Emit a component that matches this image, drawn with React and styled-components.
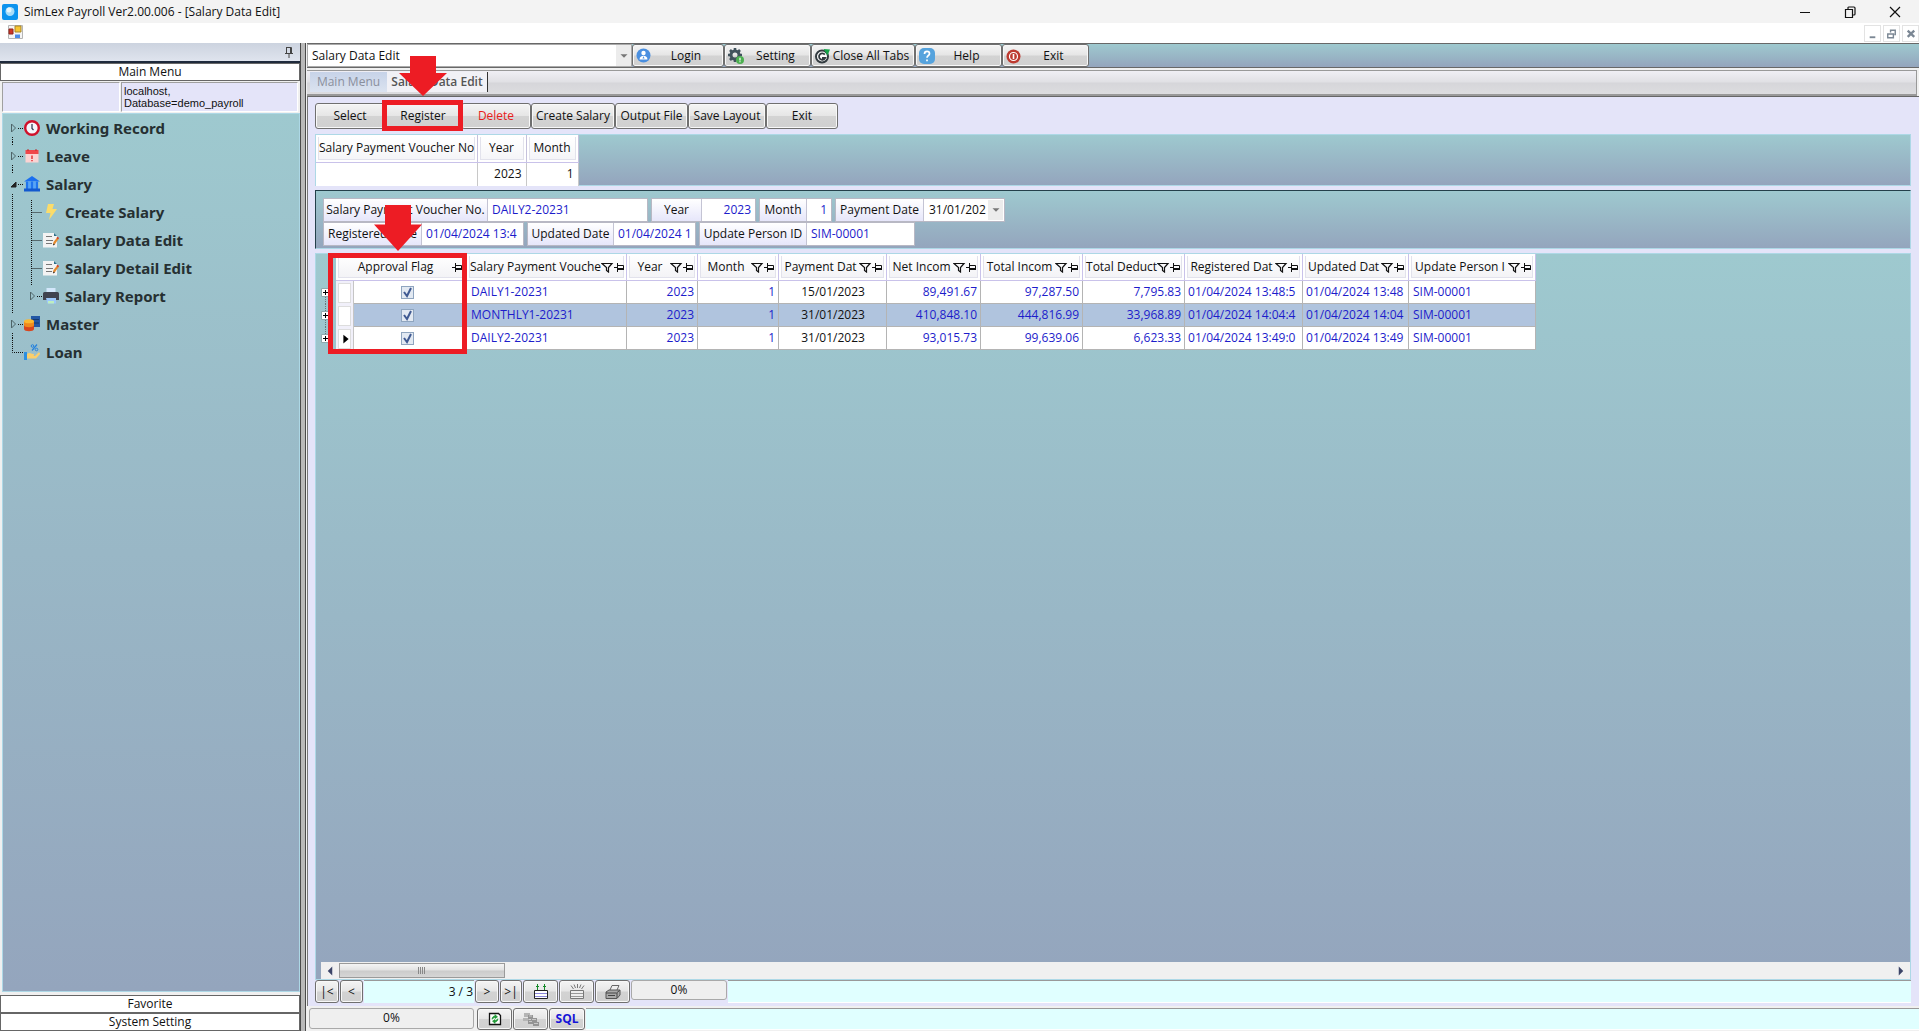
import React from 'react';
import styled, { createGlobalStyle } from 'styled-components';

const teal = 'linear-gradient(#9ec9cf, #94a5bd)';
const metal = 'linear-gradient(#f4f4f4, #e6e6e6 48%, #d3d3d3 52%, #d0d0d0)';

const menu = [
  { name: 'Working Record', icon: 'clock', depth: 0, closed: true },
  { name: 'Leave', icon: 'calendar', depth: 0, closed: true },
  { name: 'Salary', icon: 'bank', depth: 0, open: true },
  { name: 'Create Salary', icon: 'bolt', depth: 1, first: true },
  { name: 'Salary Data Edit', icon: 'note', depth: 1 },
  { name: 'Salary Detail Edit', icon: 'note', depth: 1 },
  { name: 'Salary Report', icon: 'printer', depth: 1, closed: true },
  { name: 'Master', icon: 'database', depth: 0, closed: true },
  { name: 'Loan', icon: 'loan', depth: 0, last: true },
];

const columns = [
  { name: 'Salary Payment Vouche', width: 160, align: 'left' },
  { name: 'Year', width: 71, align: 'right' },
  { name: 'Month', width: 81, align: 'right' },
  { name: 'Payment Dat', width: 108, align: 'center', dark: true },
  { name: 'Net Incom', width: 94, align: 'right' },
  { name: 'Total Incom', width: 102, align: 'right' },
  { name: 'Total Deduct', width: 102, align: 'right' },
  { name: 'Registered Dat', width: 118, align: 'left', tight: true },
  { name: 'Updated Dat', width: 106, align: 'left', tight: true },
  { name: 'Update Person I', width: 127, align: 'left' },
];

const rows = [
  ['DAILY1-20231', '2023', '1', '15/01/2023', '89,491.67', '97,287.50', '7,795.83', '01/04/2024 13:48:5', '01/04/2024 13:48', 'SIM-00001'],
  ['MONTHLY1-20231', '2023', '1', '31/01/2023', '410,848.10', '444,816.99', '33,968.89', '01/04/2024 14:04:4', '01/04/2024 14:04', 'SIM-00001'],
  ['DAILY2-20231', '2023', '1', '31/01/2023', '93,015.73', '99,639.06', '6,623.33', '01/04/2024 13:49:0', '01/04/2024 13:49', 'SIM-00001'],
];

const Global = createGlobalStyle`
  * { box-sizing: border-box; }
  body {
    margin: 0;
    background: #f0f0f0;
    color: #111;
    font: 12px/16px 'Open Sans', 'Noto Sans', sans-serif;
  }
  button, input, select {
    font: inherit;
    color: inherit;
    margin: 0;
    padding: 0;
    border: 0;
    border-radius: 0;
    background: none;
  }
  svg { display: block; flex: none; }
`;

const icons = {
  clock: (
    <>
      <circle cx="8" cy="8" r="6.800" fill="#f4f5fb" stroke="#d0112b" strokeWidth="2.400" />
      <path d="M8 4v4.500l1.500 1.500" fill="none" stroke="#28324e" strokeWidth="1.200" />
    </>
  ),
  calendar: (
    <>
      <path d="M1.500 6h13v8.500h-13z" fill="#fbd3d3" />
      <path d="M1.500 2h13v4h-13z" fill="#f0474b" />
      <path d="M4 1v2M12 1v2" stroke="#b92a30" />
      <path d="M8 7.500v3.500M8 12v1.200" stroke="#e02b30" strokeWidth="1.400" />
    </>
  ),
  bank: (
    <>
      <path d="M0 5.500L8 0l8 5.500z" fill="#1a6ff0" />
      <path d="M2 5.500h12V13H2z" fill="#58a5f5" />
      <path d="M3 5.500V13M8 5.500V13M13 5.500V13" stroke="#1f74ee" strokeWidth="2.200" />
      <path d="M0 12.500h16v3H0z" fill="#1259cf" />
    </>
  ),
  bolt: <path d="M5 0h6L9.500 5H14L6 16l1.500-7H3z" fill="#fbdc6a" />,
  note: (
    <>
      <path d="M0 1h11l3 3v11.500H0z" fill="#f3f3f3" />
      <path d="M11 1v3h3z" fill="#2d6f8a" />
      <path d="M3 4.500h6M3 8.500h7M3 11.500h6" stroke="#777" />
      <path d="M10 13l.5-3 4-5 1.500 1.500-4 5.500z" fill="#e58a2e" />
      <path d="M10 13.500l.5-2 1.500 1z" fill="#222" />
      <path d="M13.500 6l1-1.200L16 6l-1 1.300z" fill="#d13b30" />
    </>
  ),
  printer: (
    <>
      <path d="M3.500 0h9v5h-9z" fill="#d3e7fb" />
      <path d="M1.500 4h13a1.500 1.500 0 0 1 1.500 1.500V12H0V5.500A1.500 1.500 0 0 1 1.500 4z" fill="#40434f" />
      <path d="M3 10h10v5.500H4.500z" fill="#9cc8fb" />
      <path d="M5 13h6v2.500H5z" fill="#bfeec0" />
    </>
  ),
  database: (
    <>
      <path d="M7 0h9v11H7z" fill="#2357a5" />
      <path d="M8 3.500h7M8 7h7" stroke="#15396f" />
      <path d="M0 5v8c0 3 10 3 10 0V5z" fill="#d8461f" />
      <path d="M0 5v4c0 3 10 3 10 0V5z" fill="#ef8a1f" />
      <ellipse cx="5" cy="5.200" rx="5" ry="2" fill="#fbb832" />
    </>
  ),
  loan: (
    <>
      <path d="M0 8h3v8H0z" fill="#2d8fe0" />
      <path d="M3 10c3-2 4 0 6 0s1 2 0 2h2l3-3c1-1 2 0 2 1l-4 4.500H3z" fill="#fbcf6b" />
      <path d="M8 6.500L13 .5" stroke="#2581dd" strokeWidth="1.200" />
      <circle cx="8.500" cy="2" r="1.300" fill="none" stroke="#2581dd" />
      <circle cx="12.500" cy="5.500" r="1.300" fill="none" stroke="#2581dd" />
    </>
  ),
  login: (
    <>
      <circle cx="7.500" cy="7.500" r="7" fill="#4a8fe0" />
      <circle cx="7.500" cy="5" r="2.200" fill="#fff" />
      <path d="M3.500 11.500c0-5 8-5 8 0z" fill="#fff" />
      <path d="M7.500 8l-1 2.500h2z" fill="#4a8fe0" />
    </>
  ),
  setting: (
    <>
      <circle cx="7" cy="7" r="4" fill="none" stroke="#40525c" strokeWidth="3" />
      <path d="M7 0v3M7 11v3M0 7h3M11 7h3M2 2l2 2M10 4l2-2M2 12l2-2" stroke="#40525c" strokeWidth="2.600" />
      <circle cx="12" cy="12" r="4" fill="#4caf50" />
      <path d="M12 9.800v2.700M12 13.300v1" stroke="#fff" strokeWidth="1.200" />
    </>
  ),
  closeTabs: (
    <>
      <circle cx="7" cy="8.500" r="6" fill="#fff" stroke="#333b40" strokeWidth="2" />
      <path d="M9.800 6.600a3.200 3.200 0 1 0 .4 3.200H7" fill="none" stroke="#333b40" strokeWidth="1.800" />
      <path d="M8.500 1l6.500.5-2.500 6z" fill="#17a34a" />
    </>
  ),
  help: (
    <>
      <rect width="16" height="16" rx="5" fill="#56a3dd" />
      <path d="M5.500 6c0-3.500 5-3.200 5-.3 0 1.800-2.500 1.800-2.500 4M8 11.500v1.700" fill="none" stroke="#fff" strokeWidth="1.700" />
    </>
  ),
  exit: (
    <>
      <circle cx="7.500" cy="8.500" r="7" fill="#bd3a30" />
      <circle cx="7.500" cy="8.500" r="4" fill="none" stroke="#fff" strokeWidth="1.200" />
      <path d="M7.500 6v5" stroke="#fff" strokeWidth="1.600" />
    </>
  ),
  app: (
    <>
      <rect width="16" height="16" rx="2" fill="#0c93ee" />
      <circle cx="8" cy="7.500" r="4.500" fill="#a9dcf8" />
      <circle cx="7" cy="6" r="2.500" fill="#e3f5fd" />
    </>
  ),
  form: (
    <>
      <path d="M.5.500h14v13H.5z" fill="#f5f5f5" stroke="#b5b5b5" />
      <path d="M7 1h6v6H7z" fill="#f7c531" stroke="#a8862a" />
      <path d="M1 4h4v5H1z" fill="#cf3525" stroke="#8f261c" />
      <path d="M7 9.500h5V13H7z" fill="#4d8be8" />
    </>
  ),
  pin: <path d="M5.500 3.500h5v6M5.500 3v6M9.500 3v6M4 9.500h8M8 10v4" fill="none" stroke="#444" />,
  insert: (
    <>
      <path d="M1.500 6.500h13v8h-13z" fill="#fff" stroke="#222" />
      <path d="M2 9.500h12M2 12.500h12" stroke="#8a86d8" />
      <path d="M4.500 0v6M3 2.500h3M11.500 0v6M10 2.500h3" stroke="#158a2a" />
    </>
  ),
  remove: (
    <>
      <path d="M1.500 6.500h13v8h-13z" fill="#eee" stroke="#777" />
      <path d="M2 9.500h12M2 12.500h12" stroke="#999" />
      <path d="M8.500 0v4M5 .5L6.500 4M12 .5L10.500 4M2 1.500L4.500 5M15 1.500L12.500 5" stroke="#777" />
    </>
  ),
  print: (
    <>
      <path d="M5 6l2-4.500h7L12 6" fill="#eee" stroke="#666" />
      <path d="M1 8l3-2h11v5l-3 3.500H1z" fill="#aaa" stroke="#555" />
      <path d="M1 9h10.500l3-2.500M3 11.500h7M12 9v5" fill="none" stroke="#444" />
    </>
  ),
  refresh: (
    <>
      <path d="M2.500 2.500h9l2 2v9h-11z" fill="#fff" stroke="#111" strokeWidth="1.300" />
      <path d="M5 8.500C5 5 8 5 8 5V3.500L10.500 6 8 7.500V6.500M11 7.500C11 11 8 11 8 11v1.500L5.500 10 8 8.500v1" fill="#20a038" stroke="#158a2a" strokeWidth=".6" />
    </>
  ),
  stack: (
    <>
      <path d="M1 2h6v4H1zM0 7h6v3H0z" fill="#b5b5b5" />
      <path d="M5 4h5v4H5zM8 7h6v4H8zM5 9h5v4H5zM10 11h6v4h-6z" fill="#949494" />
      <path d="M6 5h3M9 8.500h4M11 12.500h4M6 10.500h3" stroke="#c9c9c9" />
    </>
  ),
  minimize: <path d="M3 8.500h10" stroke="#111" />,
  restore: <path d="M3.500 5.500h7v8h-7zM6 5V3.500A1 1 0 0 1 7 3h5a1 1 0 0 1 1 1v6a1 1 0 0 1-1 1h-1" fill="none" stroke="#111" strokeWidth="1.200" />,
  close: <path d="M3 3l10 10M13 3L3 13" stroke="#111" strokeWidth="1.200" />,
  smallMin: <path d="M5 12h6" stroke="#7b8794" strokeWidth="2" />,
  smallRestore: <path d="M4 8.500h6v4H4zM7 7V4.500h5V9h-1" fill="none" stroke="#7b8794" strokeWidth="1.500" />,
  smallClose: <path d="M5 5l7 6.500M12 5l-7 6.500" stroke="#7b8794" strokeWidth="2.500" />,
  down: <path d="M4 6h8l-4 4z" fill="#777" />,
  left: <path d="M10 4v8L6 8z" fill="#3b4468" />,
  right: <path d="M6 4v8l4-4z" fill="#3b4468" />,
  current: <path d="M5 3v10l6-5z" fill="#000" />,
};

const Icon = ({ name, size = 16 }) => (
  <svg width={size} height={size} viewBox="0 0 16 16" aria-hidden="true">{icons[name]}</svg>
);

const FilterIcon = () => (
  <svg width="13" height="12" aria-hidden="true">
    <path d="M1 2.500h10L7.500 6.500V11l-2-1.500v-3z" fill="none" stroke="#111" strokeWidth="1.200" />
  </svg>
);

const HeadPinIcon = () => (
  <svg width="11" height="12" aria-hidden="true">
    <path d="M0 6.500h3M3.500 2v9M4 4.500h5.500v4H4" fill="none" stroke="#111" />
    <path d="M4 8h6" stroke="#111" strokeWidth="2" />
  </svg>
);

// plus box with the dotted line that joins it to the next row
const PlusIcon = ({ first, last }) => (
  <svg width="18" height="23" aria-hidden="true">
    {!first && <path d="M9.500 0v7" stroke="#66787c" strokeDasharray="1 1" />}
    {!last && <path d="M9.500 16v7" stroke="#66787c" strokeDasharray="1 1" />}
    <path d="M5.500 7.500h8v8h-8z" fill="#fff" stroke="#8fa9ad" />
    <path d="M7 11.500h5M9.500 9v5" stroke="#000" />
  </svg>
);

const Window = styled.div`
  display: flex;
  flex-direction: column;
  min-height: 100vh;
`;

const TitleBar = styled.header`
  display: flex;
  align-items: center;
  gap: 6px;
  height: 23px;
  padding: 0 16px 0 2px;
  background: #f3f3f3;
  h1 {
    flex: 1;
    margin: 0;
    font-size: 12px;
    font-weight: 400;
  }
`;

const TitleButtons = styled.div`
  display: flex;
  gap: 29px;
  height: 20px;
`;

const MenuBar = styled.div`
  display: flex;
  align-items: center;
  justify-content: space-between;
  height: 20px;
  padding: 0 0 0 8px;
  background: #fff;
`;

const ChildButtons = styled.div`
  display: flex;
  gap: 2px;
  button {
    width: 17px;
    height: 17px;
    border: 1px solid #e3e3e3;
  }
`;

const Body = styled.div`
  display: flex;
  flex: 1;
`;

const Sidebar = styled.aside`
  display: flex;
  flex-direction: column;
  width: 300px;
  flex: none;
`;

const PinBar = styled.div`
  display: flex;
  justify-content: flex-end;
  height: 20px;
  padding: 0 3px 0;
  background: linear-gradient(#ccd3df, #dfe4ee);
  border-bottom: 2px solid #1f2a3c;
`;

const Section = styled.button`
  height: 18px;
  border: 1px solid #666;
  background: #fff;
  line-height: 16px;
`;

const Connection = styled.div`
  display: grid;
  grid-template-columns: 2fr 3fr;
  gap: 1px;
  height: 32px;
  padding: 1px 2px 2px;
  div {
    border: 1px solid #a0a0a0;
    border-right-color: #fff;
    border-bottom-color: #fff;
    background: #e4e4f9;
    padding: 2px;
    font: 11px/12px 'Liberation Sans', sans-serif;
  }
`;

const Tree = styled.ul`
  flex: 1;
  margin: 0 0 3px 2px;
  padding: 0;
  list-style: none;
  border: 1px solid #add8e6;
  background: ${teal};
`;

const TreeRow = styled.li`
  display: flex;
  align-items: center;
  height: 28px;
  a {
    display: flex;
    align-items: center;
    gap: 6px;
    color: #263032;
    font: 700 15px/20px 'Noto Sans', sans-serif;
    text-decoration: none;
  }
`;

const Splitter = styled.div`
  flex: none;
  width: 6px;
  border: solid #4a4a4a;
  border-width: 0 1px;
  background: #b9b9b9;
`;

const Main = styled.main`
  display: flex;
  flex-direction: column;
  flex: 1;
  min-width: 0;
  padding-left: 1px;
`;

const TopBar = styled.div`
  display: flex;
  height: 25px;
  margin-bottom: 2px;
  border: solid #686868;
  border-width: 1px 0;
  background: ${teal};
`;

const Combo = styled.div`
  display: flex;
  align-items: center;
  width: ${p => p.$width}px;
  border: 1px solid #aaa;
  background: #fff;
  select {
    appearance: none;
    flex: 1;
    min-width: 0;
    padding-left: 4px;
    height: 20px;
    outline: 0;
  }
  span {
    display: grid;
    place-items: center;
    align-self: stretch;
    width: 15px;
    background: #ececec;
  }
`;

const Button = styled.button`
  display: flex;
  align-items: center;
  justify-content: center;
  width: ${p => p.$width}px;
  flex: none;
  border: 1px solid #6f6f6f;
  border-radius: 3px;
  box-shadow: inset 0 0 0 1px #f8f8f8;
  background: ${metal};
  color: ${p => p.$color || '#111'};
  font-weight: ${p => (p.$bold ? 700 : 400)};
  white-space: nowrap;
`;

const TopButton = styled(Button)`
  padding: 0 3px;
  span { flex: 1; }
`;

const Tabs = styled.nav`
  display: flex;
  height: 26px;
  padding: 1px 0 2px 3px;
  margin-right: 2px;
  border: solid #999;
  border-width: 1px 1px 2px 0;
  background: linear-gradient(#f0eff5, #e0e0e4 48%, #d6d6da 52%, #dcdcdf);
`;

const Tab = styled.a`
  width: ${p => p.$width}px;
  line-height: 20px;
  text-align: center;
  text-decoration: none;
  white-space: nowrap;
  color: ${p => (p.$active ? '#555' : '#8a8f9c')};
  font-weight: ${p => (p.$active ? 600 : 400)};
  background: ${p => (p.$active ? '#f1f1f6' : 'linear-gradient(#c7d3e8, #dbe3f0)')};
  border-right: ${p => (p.$active ? '1px solid #333' : 0)};
`;

const Page = styled.section`
  display: flex;
  flex-direction: column;
  flex: 1;
  padding: 6px 8px 3px 7px;
  border-left: 1px solid #777;
  border-top: 1px solid #666;
  background: #e4e4f9;
`;

const Actions = styled.div`
  display: flex;
  height: 26px;
  margin-bottom: 5px;
`;

const Marked = styled.div`
  position: relative;
  display: flex;
`;

// red call-out frame drawn over the control it surrounds
const Frame = styled.div`
  position: absolute;
  inset: ${p => p.$inset};
  border: 5px solid #ed1c24;
  pointer-events: none;
`;

const ArrowBox = styled.div`
  position: absolute;
  bottom: 100%;
  left: 50%;
  margin-left: -24px;
  margin-bottom: ${p => p.$gap}px;
  pointer-events: none;
`;

const Arrow = ({ gap, height }) => (
  <ArrowBox $gap={gap}>
    <svg width="48" height={height} viewBox="0 0 48 40" preserveAspectRatio="none">
      <path d="M11 0h26v17h11L24 40 0 17h11z" fill="#ed1c24" />
    </svg>
  </ArrowBox>
);

const FilterPanel = styled.div`
  height: 52px;
  margin-bottom: 4px;
  border: 1px solid #add8e6;
  background: ${teal};
`;

const FilterTable = styled.table`
  border-collapse: collapse;
  table-layout: fixed;
  width: 262px;
  background: #fff;
  th {
    height: 27px;
    padding: 2px;
    border-right: 1px solid #c5c1dc;
    border-bottom: 1px solid #c9c2ea;
    font-weight: 400;
    white-space: nowrap;
  }
  th div {
    height: 23px;
    line-height: 22px;
    border: 1px solid #e2e2ec;
    border-top: 0;
    background: linear-gradient(#fff, #f5f5f8);
  }
  td {
    height: 23px;
    padding: 0 4px;
    border-right: 1px solid #c8c8c8;
    text-align: right;
  }
  input {
    width: 100%;
    text-align: right;
    outline: 0;
  }
`;

const DetailPanel = styled.div`
  height: 59px;
  margin-bottom: 4px;
  padding: 7px 8px 0 7px;
  border: 1px solid #add8e6;
  border-top-color: #24404a;
  border-left-color: #24404a;
  background: ${teal};
`;

const FieldRow = styled.div`
  display: flex;
  gap: 3px;
  height: 24px;
`;

const Field = styled.div`
  display: flex;
  height: 24px;
  border: 1px solid #b8b8c4;
  label {
    width: ${p => p.$label}px;
    line-height: 21px;
    text-align: center;
    white-space: nowrap;
    border-right: 1px solid #c4c4d4;
    background: linear-gradient(#fff, #e6e6fa);
  }
  input {
    width: ${p => p.$width}px;
    padding: 0 4px;
    background: #fff;
    color: #1c1ccb;
    text-align: ${p => p.$align || 'left'};
    outline: 0;
  }
  ${Combo} { border: 1px solid #fff; }
`;

const GridPanel = styled.div`
  display: flex;
  flex-direction: column;
  flex: 1;
  border: 1px solid #add8e6;
  background: ${teal};
`;

const GridArea = styled.div`
  position: relative;
  width: max-content;
`;

const Grid = styled.table`
  border-collapse: separate;
  border-spacing: 0;
  table-layout: fixed;
  width: 1220px;
  th {
    height: 27px;
    padding: 2px;
    background: #fff;
    border-right: 1px solid #c9c2ea;
    border-bottom: 1px solid #c9c2ea;
    font-weight: 400;
  }
  th:first-child, td:first-child {
    background: transparent;
    border: 0;
    padding: 0;
  }
`;

const HeadCell = styled.div`
  display: flex;
  align-items: center;
  height: 22px;
  border: 1px solid #e2e2ec;
  border-top: 0;
  background: linear-gradient(#fff, #f3f3f6);
  white-space: nowrap;
  span { flex: 1; text-align: center; }
`;

const Row = styled.tr`
  td {
    background: ${p => (p.$selected ? '#b0c4de' : '#fff')};
  }
`;

const Cell = styled.td`
  height: 23px;
  padding: 0 ${p => (p.$tight ? 1 : 3)}px 0 ${p => (p.$tight ? 3 : 4)}px;
  border-right: 1px solid #b4b4b4;
  border-bottom: 1px solid #b4b4b4;
  color: ${p => (p.$dark ? '#111' : '#1c1ccb')};
  text-align: ${p => p.$align};
  white-space: nowrap;
  overflow: hidden;
`;

const CheckCell = styled(Cell)`
  padding: 0 6px 0 0;
`;

const RowHead = styled.td`
  padding: 1px 2px;
  border-right: 1px solid #c5c5c5;
  && { background: #f1f0fa; }
  div {
    display: grid;
    place-items: center;
    height: 20px;
    background: #fff;
    border: 1px solid #ddd;
  }
`;

const Expander = styled.button`
  display: block;
`;

const Check = styled.input`
  appearance: none;
  display: block;
  width: 13px;
  height: 13px;
  margin: 0 auto;
  border: 1px solid #8fa5bf;
  background: #e6ecf4;
  &:checked {
    background: url("data:image/svg+xml,%3Csvg xmlns='http://www.w3.org/2000/svg' viewBox='0 0 11 11'%3E%3Cpath d='M2 5l3 4 4-8' fill='none' stroke='%23405a92' stroke-width='2'/%3E%3C/svg%3E") #e2e9f2;
  }
`;

const Scroll = styled.div`
  display: flex;
  justify-content: space-between;
  height: 17px;
  margin: auto 0 0 5px;
  background: #f0f0f0;
`;

const Thumb = styled.div`
  display: grid;
  place-items: center;
  width: 166px;
  margin: 1px auto 1px 0;
  border: 1px solid #9a9a9a;
  background: linear-gradient(#f4f4f4, #e2e2e2 48%, #cbcbcb 52%, #d6d6d6);
`;

const NavBar = styled.div`
  display: flex;
  gap: 1px;
  height: 23px;
`;

const Position = styled.input`
  width: 110px;
  padding-right: 1px;
  border-top: 1px solid #999;
  background: #e0ffff;
  text-align: right;
  outline: 0;
`;

const Progress = styled.div`
  width: ${p => p.$width}px;
  height: 20px;
  line-height: 18px;
  text-align: center;
  border: 1px solid #a9a9a9;
  border-radius: 3px;
  background: #efefef;
`;

const Fill = styled.div`
  flex: 1;
  border-top: 1px solid #999;
  border-bottom: 1px solid #fff;
  background: #e0ffff;
`;

const StatusBar = styled.footer`
  display: flex;
  gap: 1px;
  height: 25px;
  padding: 2px 0 1px 2px;
  background: #f0f0f0;
  ${Progress} { height: 21px; margin-right: 2px; }
`;

const Connector = ({ item }) => {
  const x = item.depth ? 28 : 9;
  const end = item.depth ? 40 : 21;
  const dots = { stroke: '#111', strokeDasharray: '1 1' };
  return (
    <svg width={end} height="28" viewBox={`0 0 ${end} 28`} aria-hidden="true">
      {item.depth === 1 && <path d="M9.500 0v28" {...dots} />}
      {item.closed && (
        <>
          <path d={`M${x - 0.5} 10v8l4-4z`} fill="none" stroke="#4e6468" />
          <path d={`M${x + 6} 14.500H${end - 1}`} {...dots} />
          {!item.depth && <path d={`M${x + 0.5} 23v5`} {...dots} />}
          {!item.depth && item.name !== 'Working Record' && <path d={`M${x + 0.5} 0v4`} {...dots} />}
        </>
      )}
      {item.open && (
        <>
          <path d={`M${x - 1} 17h5v-5z`} fill="#222" stroke="#222" />
          <path d={`M${x + 6} 14.500H${end - 1}M${x + 0.5} 24v4M${x + 0.5} 0v4`} {...dots} />
        </>
      )}
      {item.last && <path d={`M${x + 0.5} 0v14.500H${end}`} fill="none" {...dots} />}
      {item.depth === 1 && !item.closed && <path d={`M${x + 0.5} ${item.first ? 2 : 0}V28M${x + 0.5} 14.500H${end - 1}`} {...dots} />}
      {item.depth === 1 && item.closed && <path d={`M${x + 0.5} 0v4`} {...dots} />}
    </svg>
  );
};

const DetailField = ({ id, label, value, labelWidth, width, align }) => (
  <Field $label={labelWidth} $width={width} $align={align}>
    <label htmlFor={id}>{label}</label>
    <input id={id} defaultValue={value} />
  </Field>
);

const SideMenu = () => (
  <Sidebar>
    <PinBar><button aria-label="Pin"><Icon name="pin" /></button></PinBar>
    <Section>Main Menu</Section>
    <Connection>
      <div />
      <div>localhost,<br />Database=demo_payroll</div>
    </Connection>
    <Tree>
      {menu.map(item => (
        <TreeRow key={item.name}>
          <Connector item={item} />
          <a href="#"><Icon name={item.icon} />{item.name}</a>
        </TreeRow>
      ))}
    </Tree>
    <Section>Favorite</Section>
    <Section>System Setting</Section>
  </Sidebar>
);

const ResultGrid = () => (
  <GridArea>
    <Grid>
      <colgroup>
        <col style={{ width: 20 }} />
        <col style={{ width: 18 }} />
        <col style={{ width: 113 }} />
        {columns.map(c => <col key={c.name} style={{ width: c.width }} />)}
      </colgroup>
      <thead>
        <tr>
          <th />
          <th colSpan="2">
            <HeadCell><span>Approval Flag</span><HeadPinIcon /></HeadCell>
          </th>
          {columns.map(c => (
            <th key={c.name}>
              <HeadCell>
                <span>{c.name}</span>
                <FilterIcon />
                <HeadPinIcon />
              </HeadCell>
            </th>
          ))}
        </tr>
      </thead>
      <tbody>
        {rows.map((row, i) => (
          <Row key={row[0]} $selected={i === 1}>
            <td>
              <Expander aria-label={`Expand ${row[0]}`}>
                <PlusIcon first={i === 0} last={i === rows.length - 1} />
              </Expander>
            </td>
            <RowHead><div>{i === 2 && <Icon name="current" size={14} />}</div></RowHead>
            <CheckCell><Check type="checkbox" defaultChecked aria-label={`Approve ${row[0]}`} /></CheckCell>
            {row.map((value, n) => (
              <Cell key={n} $align={columns[n].align} $dark={columns[n].dark} $tight={columns[n].tight}>{value}</Cell>
            ))}
          </Row>
        ))}
      </tbody>
    </Grid>
    <Frame $inset="-1px 1069px -4px 12px"><Arrow gap={7} height={46} /></Frame>
  </GridArea>
);

const App = () => (
  <>
    <Global />
    <Window>
      <TitleBar>
        <Icon name="app" />
        <h1>SimLex Payroll Ver2.00.006 - [Salary Data Edit]</h1>
        <TitleButtons>
          <button aria-label="Minimize"><Icon name="minimize" /></button>
          <button aria-label="Restore"><Icon name="restore" /></button>
          <button aria-label="Close"><Icon name="close" /></button>
        </TitleButtons>
      </TitleBar>
      <MenuBar>
        <Icon name="form" />
        <ChildButtons>
          <button aria-label="Minimize tab"><Icon name="smallMin" size={15} /></button>
          <button aria-label="Restore tab"><Icon name="smallRestore" size={15} /></button>
          <button aria-label="Close tab"><Icon name="smallClose" size={15} /></button>
        </ChildButtons>
      </MenuBar>
      <Body>
        <SideMenu />
        <Splitter />
        <Main>
          <TopBar>
            <Combo $width={325}>
              <select aria-label="Screen"><option>Salary Data Edit</option></select>
              <span><Icon name="down" size={14} /></span>
            </Combo>
            <TopButton $width={92}><Icon name="login" /><span>Login</span></TopButton>
            <TopButton $width={87}><Icon name="setting" /><span>Setting</span></TopButton>
            <TopButton $width={104}><Icon name="closeTabs" /><span>Close All Tabs</span></TopButton>
            <TopButton $width={87}><Icon name="help" /><span>Help</span></TopButton>
            <TopButton $width={87}><Icon name="exit" /><span>Exit</span></TopButton>
          </TopBar>
          <Tabs>
            <Tab href="#" $width={77}>Main Menu</Tab>
            <Tab href="#" $width={101} $active>Salary Data Edit</Tab>
          </Tabs>
          <Page>
            <Actions>
              <Button $width={70}>Select</Button>
              <Marked>
                <Button $width={76}>Register</Button>
                <Frame $inset="-3px -2px -2px -3px"><Arrow gap={9} height={40} /></Frame>
              </Marked>
              <Button $width={70} $color="#e81c1c">Delete</Button>
              <Button $width={84}>Create Salary</Button>
              <Button $width={73}>Output File</Button>
              <Button $width={78}>Save Layout</Button>
              <Button $width={72}>Exit</Button>
            </Actions>
            <FilterPanel>
              <FilterTable>
                <colgroup>
                  <col style={{ width: 161 }} />
                  <col style={{ width: 49 }} />
                  <col style={{ width: 52 }} />
                </colgroup>
                <thead>
                  <tr>
                    <th><div>Salary Payment Voucher No</div></th>
                    <th><div>Year</div></th>
                    <th><div>Month</div></th>
                  </tr>
                </thead>
                <tbody>
                  <tr>
                    <td><input aria-label="Salary Payment Voucher No" /></td>
                    <td><input aria-label="Year" defaultValue="2023" /></td>
                    <td><input aria-label="Month" defaultValue="1" /></td>
                  </tr>
                </tbody>
              </FilterTable>
            </FilterPanel>
            <DetailPanel>
              <FieldRow>
                <DetailField id="voucher" label="Salary Payment Voucher No." value="DAILY2-20231" labelWidth={164} width={159} />
                <DetailField id="year" label="Year" value="2023" labelWidth={50} width={53} align="right" />
                <DetailField id="month" label="Month" value="1" labelWidth={47} width={24} align="right" />
                <Field $label={88}>
                  <label htmlFor="payment">Payment Date</label>
                  <Combo $width={80}>
                    <select id="payment"><option>31/01/202</option></select>
                    <span><Icon name="down" size={14} /></span>
                  </Combo>
                </Field>
              </FieldRow>
              <FieldRow>
                <DetailField id="registered" label="Registered Date" value="01/04/2024 13:4" labelWidth={98} width={101} />
                <DetailField id="updated" label="Updated Date" value="01/04/2024 1" labelWidth={86} width={81} />
                <DetailField id="person" label="Update Person ID" value="SIM-00001" labelWidth={107} width={107} />
              </FieldRow>
            </DetailPanel>
            <GridPanel>
              <ResultGrid />
              <Scroll>
                <button aria-label="Scroll left"><Icon name="left" size={18} /></button>
                <Thumb>
                  <svg width="8" height="7"><path d="M.5 0v7M2.500 0v7M4.500 0v7M6.500 0v7" stroke="#888" /></svg>
                </Thumb>
                <button aria-label="Scroll right"><Icon name="right" size={18} /></button>
              </Scroll>
            </GridPanel>
            <NavBar>
              <Button $width={24}>|&lt;</Button>
              <Button $width={23}>&lt;</Button>
              <Position aria-label="Record" defaultValue="3 / 3" />
              <Button $width={24}>&gt;</Button>
              <Button $width={22}>&gt;|</Button>
              <Button $width={35} aria-label="Insert row"><Icon name="insert" /></Button>
              <Button $width={35} aria-label="Remove row"><Icon name="remove" /></Button>
              <Button $width={35} aria-label="Print"><Icon name="print" /></Button>
              <Progress $width={96}>0%</Progress>
              <Fill />
            </NavBar>
          </Page>
          <StatusBar>
            <Progress $width={165}>0%</Progress>
            <Button $width={35} aria-label="Refresh"><Icon name="refresh" /></Button>
            <Button $width={35} aria-label="Layers"><Icon name="stack" /></Button>
            <Button $width={36} $bold $color="#1515d8">SQL</Button>
            <Fill />
          </StatusBar>
        </Main>
      </Body>
    </Window>
  </>
);

export default App;
